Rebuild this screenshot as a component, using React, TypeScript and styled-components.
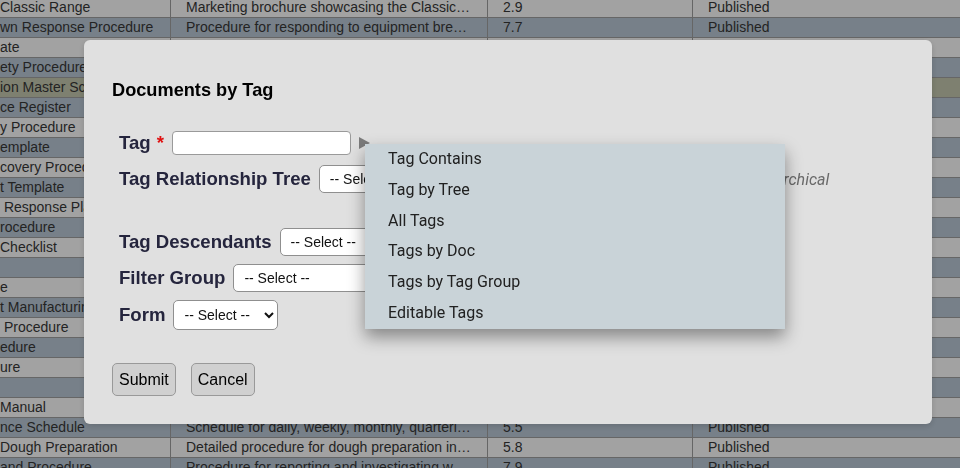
import styled, { createGlobalStyle } from "styled-components";

type Tone = "light" | "blue" | "olive";

type DocRow = {
  name: string;
  desc: string;
  version: string;
  status: string;
};

const docs: DocRow[] = [
  { name: "Classic Range", desc: "Marketing brochure showcasing the Classic Range of breads and pastries", version: "2.9", status: "Published" },
  { name: "wn Response Procedure", desc: "Procedure for responding to equipment breakdowns on the line", version: "7.7", status: "Published" },
  { name: "ate", desc: "Template for recording supplier audits", version: "1.4", status: "Published" },
  { name: "ety Procedure", desc: "Food safety controls for all production areas", version: "3.2", status: "Published" },
  { name: "ion Master Schedule", desc: "Weekly production master schedule", version: "4.0", status: "Draft" },
  { name: "ce Register", desc: "Register of all maintenance activities", version: "2.1", status: "Published" },
  { name: "y Procedure", desc: "Site security procedure for staff and visitors", version: "1.8", status: "Published" },
  { name: "emplate", desc: "Template for daily cleaning logs", version: "1.1", status: "Published" },
  { name: "covery Procedure", desc: "Disaster recovery procedure for IT systems", version: "2.6", status: "Published" },
  { name: "t Template", desc: "Template for incident reports", version: "1.9", status: "Published" },
  { name: " Response Plan", desc: "Emergency response plan for the bakery", version: "3.3", status: "Published" },
  { name: "rocedure", desc: "Product recall procedure", version: "4.4", status: "Published" },
  { name: "Checklist", desc: "Pre-start checklist for ovens and mixers", version: "1.2", status: "Published" },
  { name: "", desc: "HACCP plan for all product lines", version: "6.1", status: "Published" },
  { name: "e", desc: "Pest control guide", version: "1.0", status: "Published" },
  { name: "t Manufacturing Specification", desc: "Specification for product manufacturing", version: "2.2", status: "Published" },
  { name: " Procedure", desc: "Waste handling procedure", version: "1.6", status: "Published" },
  { name: "edure", desc: "Sanitation procedure", version: "3.0", status: "Published" },
  { name: "ure", desc: "Glass breakage procedure", version: "2.4", status: "Published" },
  { name: "", desc: "Staff policy", version: "1.3", status: "Published" },
  { name: "Manual", desc: "Quality manual", version: "5.0", status: "Published" },
  { name: "nce Schedule", desc: "Schedule for daily, weekly, monthly, quarterly and annual maintenance", version: "5.5", status: "Published" },
  { name: "Dough Preparation", desc: "Detailed procedure for dough preparation in the mixing room", version: "5.8", status: "Published" },
  { name: "and Procedure", desc: "Procedure for reporting and investigating workplace incidents", version: "7.9", status: "Published" },
];

const menuItems = [
  "Tag Contains",
  "Tag by Tree",
  "All Tags",
  "Tags by Doc",
  "Tags by Tag Group",
  "Editable Tags",
];

const toneFor = (i: number): Tone => (i === 4 ? "olive" : i % 2 === 0 ? "light" : "blue");

const App = () => {
  return (
    <>
      <GlobalStyle />
      <Table>
        {docs.map((d, i) => (
          <Row key={i} $tone={toneFor(i)}>
            <NameCell>{d.name}</NameCell>
            <Cell>{d.desc}</Cell>
            <Cell>{d.version}</Cell>
            <Cell>{d.status}</Cell>
          </Row>
        ))}
      </Table>

      <Backdrop>
        <Modal>
          <Title>Documents by Tag</Title>
          <Form>
            <FieldRow $after={10}>
              <Label>
                Tag <Required>*</Required>
              </Label>
              <TextInput type="text" />
              <Trigger>
                <svg width="11" height="12" viewBox="0 0 11 12">
                  <polygon points="0,0 11,6 0,12" fill="#7b7b7b" />
                </svg>
                <Menu>
                  {menuItems.map((m) => (
                    <MenuItem key={m}>{m}</MenuItem>
                  ))}
                </Menu>
              </Trigger>
            </FieldRow>

            <FieldRow $after={35}>
              <Label>Tag Relationship Tree</Label>
              <Select $width={150}>
                <option>-- Select --</option>
              </Select>
              <Hint>Lists tags under the chosen tree, flat or hierarchical</Hint>
            </FieldRow>

            <FieldRow>
              <Label>Tag Descendants</Label>
              <Select>
                <option>-- Select --</option>
              </Select>
            </FieldRow>

            <FieldRow>
              <Label>Filter Group</Label>
              <Select $width={220}>
                <option>-- Select --</option>
              </Select>
            </FieldRow>

            <FieldRow $after={0}>
              <Label>Form</Label>
              <Select $height={30}>
                <option>-- Select --</option>
              </Select>
            </FieldRow>
          </Form>

          <Actions>
            <Button>Submit</Button>
            <Button>Cancel</Button>
          </Actions>
        </Modal>
      </Backdrop>
    </>
  );
};

const GlobalStyle = createGlobalStyle`
  html, body {
    margin: 0;
    padding: 0;
  }
  body {
    font-family: "Liberation Sans", Arial, sans-serif;
    background: #ffffff;
    overflow: hidden;
  }
`;

const toneColors: Record<Tone, string> = {
  light: "#fefefe",
  blue: "#bac8d6",
  olive: "#c5c9af",
};

const Table = styled.div`
  margin-top: -2px;
  width: 960px;
  overflow: hidden;
`;

const Row = styled.div<{ $tone: Tone }>`
  display: grid;
  grid-template-columns: 170px 317px 205px 1fr;
  height: 20px;
  box-sizing: border-box;
  border-bottom: 1px solid #a0a0a0;
  background: ${(p) => toneColors[p.$tone]};
  color: #383838;
  font-size: 14px;
  line-height: 19px;
`;

const NameCell = styled.div`
  white-space: pre;
  overflow: hidden;
`;

const Cell = styled.div`
  border-left: 1px solid #a0a0a0;
  padding: 0 16px 0 15px;
  white-space: nowrap;
  overflow: hidden;
  text-overflow: ellipsis;
`;

const Backdrop = styled.div`
  position: fixed;
  inset: 0;
  background: rgba(0, 0, 0, 0.36);
  display: flex;
  align-items: flex-start;
  padding: 40px 0 0 84px;
`;

const Modal = styled.div`
  width: 848px;
  height: 384px;
  box-sizing: border-box;
  background: #e0e0e0;
  border-radius: 6px;
  padding: 40px 28px 0;
  box-shadow: 0 2px 6px rgba(0, 0, 0, 0.15);
`;

const Title = styled.h2`
  margin: 0;
  font-size: 18.2px;
  line-height: 20px;
  font-weight: bold;
  color: #000;
`;

const Form = styled.div`
  margin-top: 31px;
  padding-left: 7px;
  display: flex;
  flex-direction: column;
`;

const FieldRow = styled.div<{ $after?: number }>`
  display: flex;
  align-items: center;
  gap: 8px;
  margin-bottom: ${(p) => (p.$after ?? 8)}px;
`;

const Label = styled.label`
  font-size: 18.6px;
  font-weight: bold;
  color: #25253d;
  white-space: nowrap;
`;

const Required = styled.span`
  color: #e01010;
  margin-left: 1px;
`;

const TextInput = styled.input`
  width: 179px;
  height: 24px;
  box-sizing: border-box;
  border: 1px solid #9a9a9a;
  border-radius: 4px;
  background: #fff;
`;

const Trigger = styled.div`
  position: relative;
  display: flex;
  align-items: center;
  height: 14px;
`;

const Menu = styled.div`
  position: absolute;
  left: 6px;
  top: 8px;
  width: 420px;
  background: #c9d3d8;
  box-shadow: 0 8px 16px rgba(0, 0, 0, 0.4);
  z-index: 5;
`;

const MenuItem = styled.div`
  padding: 6px 23px;
  line-height: 18.8px;
  font-family: Roboto, "Liberation Sans", sans-serif;
  font-size: 16px;
  color: #212121;
  white-space: nowrap;
`;

const Select = styled.select<{ $width?: number; $height?: number }>`
  width: ${(p) => (p.$width ? `${p.$width}px` : "105px")};
  height: ${(p) => (p.$height ? `${p.$height}px` : "28px")};
  box-sizing: border-box;
  padding: 0 6px;
  border: 1px solid #8f8f8f;
  border-radius: 5px;
  background: #fff;
  color: #111;
  font-family: "Liberation Sans", Arial, sans-serif;
  font-size: 14px;
`;

const Hint = styled.span`
  font-family: Roboto, "Liberation Sans", sans-serif;
  font-style: italic;
  font-size: 16px;
  color: #6a6a6a;
  white-space: nowrap;
`;

const Actions = styled.div`
  margin-top: 33px;
  display: flex;
  gap: 15px;
`;

const Button = styled.button`
  height: 33px;
  padding: 0 6px;
  background: #d0d0d0;
  border: 1px solid #999;
  border-radius: 5px;
  font-family: "Liberation Sans", Arial, sans-serif;
  font-size: 16px;
  color: #000;
`;

export default App;
